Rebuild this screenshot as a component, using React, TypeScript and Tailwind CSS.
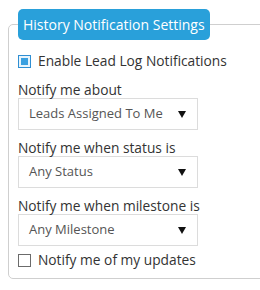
import { useState } from 'react';

const SELECTS = [
  { label: 'Notify me about', value: 'Leads Assigned To Me', first: true },
  { label: 'Notify me when status is', value: 'Any Status', first: false },
  { label: 'Notify me when milestone is', value: 'Any Milestone', first: false },
];

function Caret() {
  return (
    <svg width="8" height="7" viewBox="0 0 8 7" className="shrink-0">
      <path d="M0 0 H8 L4 7 Z" fill="#111" />
    </svg>
  );
}

export default function App() {
  const [enabled, setEnabled] = useState(true);
  const [mine, setMine] = useState(false);

  return (
    <div
      className="w-[260px] h-[290px] overflow-hidden bg-white text-[13.75px] text-[#333]"
      style={{ fontFamily: '"Open Sans", "Noto Sans", sans-serif' }}
    >
      <fieldset className="ml-2 mt-[9px] w-[280px] rounded-[5px] border border-[#cfcfcf] px-[9px] pb-2">
        <legend className="h-[31px] rounded-[5px] bg-[#29a0da] px-[5px] text-[14px] leading-[31px] text-white">
          History Notification Settings
        </legend>

        <button
          type="button"
          onClick={() => setEnabled(!enabled)}
          className="mt-[11px] flex h-5 items-center gap-[7px]"
        >
          <span className="flex h-[13px] w-[13px] items-center justify-center border border-[#2f8fd3] bg-[#e8f4fc]">
            {enabled ? <span className="h-[7px] w-[7px] bg-[#3aa0e0]" /> : null}
          </span>
          <span className="leading-5">Enable Lead Log Notifications</span>
        </button>

        {SELECTS.map((s) => (
          <div key={s.label}>
            <div className={`${s.first ? 'mt-[11px]' : 'mt-[10px]'} h-4 leading-4`}>{s.label}</div>
            <div className="flex h-8 w-[180px] items-center justify-between border border-[#dcdcdc] pl-[10px] pr-[11px] text-[13px] text-[#555]">
              <span>{s.value}</span>
              <Caret />
            </div>
          </div>
        ))}

        <button
          type="button"
          onClick={() => setMine(!mine)}
          className="mt-1 flex h-5 items-center gap-[7px]"
        >
          <span className="flex h-[13px] w-[13px] items-center justify-center border border-[#6b6b6b] bg-white">
            {mine ? <span className="h-[7px] w-[7px] bg-[#3aa0e0]" /> : null}
          </span>
          <span className="leading-5">Notify me of my updates</span>
        </button>
      </fieldset>
    </div>
  );
}
